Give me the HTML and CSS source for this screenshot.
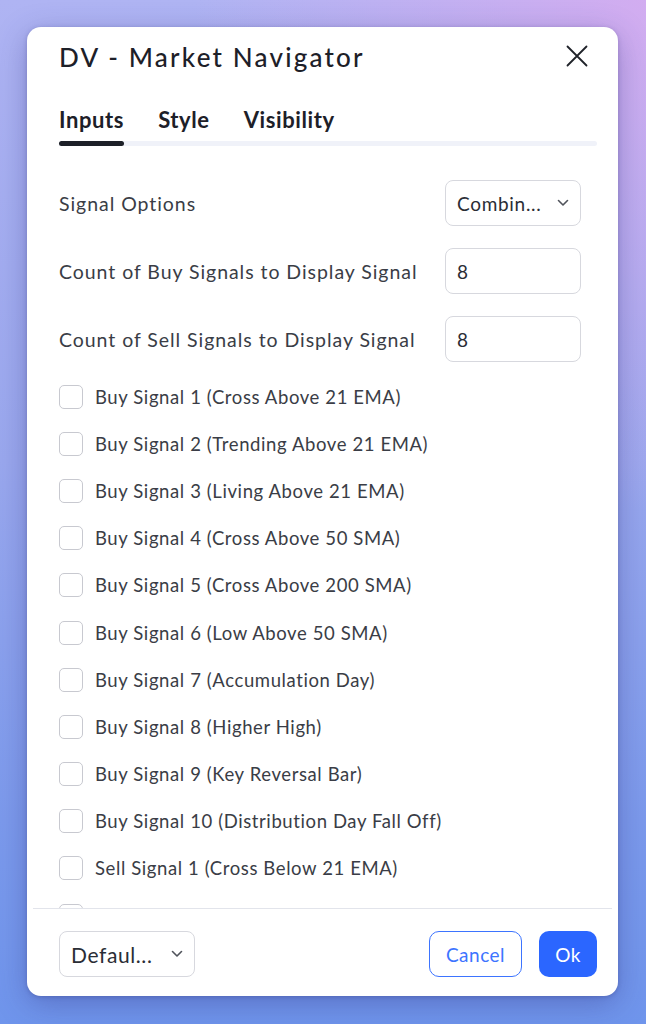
FILE: index.html
```html
<!DOCTYPE html>
<html lang="en">
<head>
<meta charset="utf-8">
<title>DV - Market Navigator</title>
<link rel="stylesheet" href="styles.css">
</head>
<body>
<div class="dialog">
  <div class="header">
    <h1 class="title">DV - Market Navigator</h1>
    <button class="close" aria-label="Close">
      <svg width="22" height="22" viewBox="0 0 22 22"><path d="M1.5 1.5 L20.5 20.5 M20.5 1.5 L1.5 20.5" stroke="#1f2229" stroke-width="1.8" stroke-linecap="round"/></svg>
    </button>
  </div>
  <div class="tabs">
    <div class="tab-list">
      <span class="tab active">Inputs</span>
      <span class="tab">Style</span>
      <span class="tab">Visibility</span>
    </div>
    <div class="track"><div class="indicator"></div></div>
  </div>
  <div class="body">
    <div class="field">
      <span class="label">Signal Options</span>
      <div class="select"><span>Combin...</span><svg width="12" height="8" viewBox="0 0 12 8"><path d="M1.5 1.5 L6 6 L10.5 1.5" fill="none" stroke="#50535b" stroke-width="1.6" stroke-linecap="round" stroke-linejoin="round"/></svg></div>
    </div>
    <div class="field">
      <span class="label">Count of Buy Signals to Display Signal</span>
      <div class="input">8</div>
    </div>
    <div class="field">
      <span class="label">Count of Sell Signals to Display Signal</span>
      <div class="input">8</div>
    </div>
    <div class="checks">
      <label class="check"><span class="box"></span>Buy Signal 1 (Cross Above 21 EMA)</label>
      <label class="check"><span class="box"></span>Buy Signal 2 (Trending Above 21 EMA)</label>
      <label class="check"><span class="box"></span>Buy Signal 3 (Living Above 21 EMA)</label>
      <label class="check"><span class="box"></span>Buy Signal 4 (Cross Above 50 SMA)</label>
      <label class="check"><span class="box"></span>Buy Signal 5 (Cross Above 200 SMA)</label>
      <label class="check"><span class="box"></span>Buy Signal 6 (Low Above 50 SMA)</label>
      <label class="check"><span class="box"></span>Buy Signal 7 (Accumulation Day)</label>
      <label class="check"><span class="box"></span>Buy Signal 8 (Higher High)</label>
      <label class="check"><span class="box"></span>Buy Signal 9 (Key Reversal Bar)</label>
      <label class="check"><span class="box"></span>Buy Signal 10 (Distribution Day Fall Off)</label>
      <label class="check"><span class="box"></span>Sell Signal 1 (Cross Below 21 EMA)</label>
      <label class="check"><span class="box"></span>Sell Signal 2 (Trending Below 21 EMA)</label>
    </div>
  </div>
  <div class="footer">
    <div class="select footer-select"><span>Defaul...</span><svg width="12" height="8" viewBox="0 0 12 8"><path d="M1.5 1.5 L6 6 L10.5 1.5" fill="none" stroke="#50535b" stroke-width="1.6" stroke-linecap="round" stroke-linejoin="round"/></svg></div>
    <div class="actions">
      <button class="btn cancel">Cancel</button>
      <button class="btn ok">Ok</button>
    </div>
  </div>
</div>
</body>
</html>
```

FILE: styles.css
```css
* { box-sizing: border-box; }
html, body { margin: 0; height: 100%; }
body {
  width: 646px;
  height: 1024px;
  padding: 27px 28px 28px 27px;
  font-family: "Lato", "Noto Sans", sans-serif;
  background:
    radial-gradient(ellipse 70% 50% at 100% 0%, rgba(214,172,240,0.9), rgba(214,172,240,0) 100%),
    linear-gradient(180deg, #afb4f3 0%, #9aa8ee 45%, #7c9aec 80%, #6f95ec 100%);
  overflow: hidden;
}
.dialog {
  width: 591px;
  height: 969px;
  background: #fff;
  border-radius: 14px;
  box-shadow: 0 8px 30px rgba(50, 50, 130, 0.35), 0 1px 4px rgba(40,40,100,0.25);
  display: flex;
  flex-direction: column;
  overflow: hidden;
}
.header {
  display: flex;
  align-items: center;
  justify-content: space-between;
  padding: 12px 30px 0 32px;
  height: 48px;
  flex: none;
}
.title {
  margin: 0;
  font-size: 26px;
  font-weight: 500;
  letter-spacing: 2.2px;
  color: #1d2028;
  line-height: 36px;
}
.close {
  border: 0;
  background: none;
  padding: 0;
  width: 22px;
  height: 22px;
  display: flex;
  margin-top: -2px;
}
.tabs {
  padding: 32px 21px 0 32px;
  flex: none;
}
.tab-list {
  display: flex;
  gap: 34px;
  height: 34px;
  align-items: flex-start;
}
.tab {
  font-size: 22px;
  font-weight: 700;
  color: #1d2028;
  line-height: 26px;
  letter-spacing: 0.6px;
}
.track {
  height: 5px;
  background: #f0f2f9;
  border-radius: 3px;
}
.indicator {
  width: 65px;
  height: 5px;
  background: #1d2028;
  border-radius: 3px;
}
.body {
  flex: 1;
  min-height: 0;
  overflow: hidden;
  padding: 34px 37px 0 32px;
}
.field {
  display: flex;
  align-items: center;
  justify-content: space-between;
  height: 46px;
  margin-bottom: 22px;
}
.field:nth-child(3) { margin-bottom: 11px; }
.label {
  font-size: 19.5px;
  color: #3a3d46;
  letter-spacing: 0.95px;
}
.check {
  font-size: 18.5px;
  color: #3a3d46;
  letter-spacing: 0.6px;
}
.select, .input {
  width: 136px;
  height: 46px;
  border: 1px solid #d7d8de;
  border-radius: 8px;
  display: flex;
  align-items: center;
  padding: 0 11px 0 11px;
  font-size: 19px;
  color: #2a2d35;
  letter-spacing: 0.7px;
}
.select { justify-content: space-between; }
.checks {
  display: flex;
  flex-direction: column;
}
.check {
  height: 47.2px;
  display: flex;
  align-items: center;
  gap: 12px;
  flex: none;
}
.box {
  width: 24px;
  height: 24px;
  border: 1.5px solid #c8c9d0;
  border-radius: 5px;
  flex: none;
}
.footer {
  flex: none;
  height: 88px;
  margin: 0 6px;
  border-top: 1px solid #e2e4eb;
  display: flex;
  align-items: flex-start;
  justify-content: space-between;
  padding: 22px 15px 0 26px;
}
.footer-select { font-size: 21px; letter-spacing: 0.6px; }
.actions {
  display: flex;
  gap: 17px;
}
.btn {
  height: 46px;
  border-radius: 10px;
  font-family: inherit;
  font-size: 19px;
  letter-spacing: 0.5px;
  padding: 0;
}
.cancel {
  width: 93px;
  border: 1.5px solid #3d74ff;
  background: #fff;
  color: #3d74ff;
}
.ok {
  width: 58px;
  border: 0;
  background: #2b66ff;
  color: #fff;
}
```
